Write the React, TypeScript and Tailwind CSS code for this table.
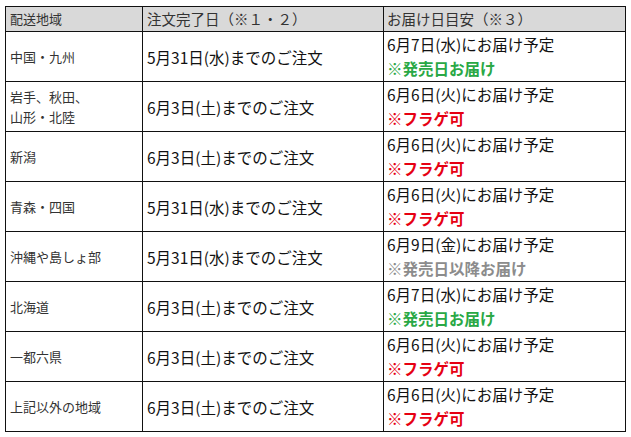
import React from "react";

type Note = { text: string; tone: "green" | "red" | "gray" };

const rows: { area: string[]; order: string; arrive: string; note: Note }[] = [
  { area: ["中国・九州"], order: "5月31日(水)までのご注文", arrive: "6月7日(水)にお届け予定", note: { text: "※発売日お届け", tone: "green" } },
  { area: ["岩手、秋田、", "山形・北陸"], order: "6月3日(土)までのご注文", arrive: "6月6日(火)にお届け予定", note: { text: "※フラゲ可", tone: "red" } },
  { area: ["新潟"], order: "6月3日(土)までのご注文", arrive: "6月6日(火)にお届け予定", note: { text: "※フラゲ可", tone: "red" } },
  { area: ["青森・四国"], order: "5月31日(水)までのご注文", arrive: "6月6日(火)にお届け予定", note: { text: "※フラゲ可", tone: "red" } },
  { area: ["沖縄や島しょ部"], order: "5月31日(水)までのご注文", arrive: "6月9日(金)にお届け予定", note: { text: "※発売日以降お届け", tone: "gray" } },
  { area: ["北海道"], order: "6月3日(土)までのご注文", arrive: "6月7日(水)にお届け予定", note: { text: "※発売日お届け", tone: "green" } },
  { area: ["一都六県"], order: "6月3日(土)までのご注文", arrive: "6月6日(火)にお届け予定", note: { text: "※フラゲ可", tone: "red" } },
  { area: ["上記以外の地域"], order: "6月3日(土)までのご注文", arrive: "6月6日(火)にお届け予定", note: { text: "※フラゲ可", tone: "red" } },
];

const toneClass = {
  green: "text-[#2aa845]",
  red: "text-[#e60012]",
  gray: "text-[#8c8c8c]",
};

export default function App() {
  return (
    <div className="w-[631px] h-[437px] bg-white pt-[6px] pl-[5px] font-['Meiryo','Noto_Sans_CJK_JP',sans-serif]">
      <table className="border-collapse w-[621px] table-fixed">
        <colgroup>
          <col className="w-[137px]" />
          <col className="w-[241px]" />
          <col className="w-[242px]" />
        </colgroup>
        <thead>
          <tr className="h-[25px] bg-[#d9d9d9] text-[#333]">
            <th className="border border-[#111] px-1 text-left font-normal text-[13px] leading-[24px]">配送地域</th>
            <th className="border border-[#111] px-1 text-left font-normal text-[14.5px] leading-[24px]">注文完了日（※１・２）</th>
            <th className="border border-[#111] px-[3px] text-left font-normal text-[14.5px] leading-[24px]">お届け日目安（※３）</th>
          </tr>
        </thead>
        <tbody>
          {rows.map((r, i) => (
            <tr key={i} className="h-[50px]">
              <td className="border border-[#111] px-1 align-middle text-[13px] leading-[20px] text-[#333]">
                {r.area.map((a) => (
                  <div key={a}>{a}</div>
                ))}
              </td>
              <td className="border border-[#111] px-1 align-middle text-[15.5px] leading-[24px] text-[#111]">{r.order}</td>
              <td className="border border-[#111] px-[3px] align-top text-[15.5px] leading-[24px] text-[#111]">
                <div>{r.arrive}</div>
                <div className={`font-bold ${toneClass[r.note.tone]}`}>{r.note.text}</div>
              </td>
            </tr>
          ))}
        </tbody>
      </table>
    </div>
  );
}
